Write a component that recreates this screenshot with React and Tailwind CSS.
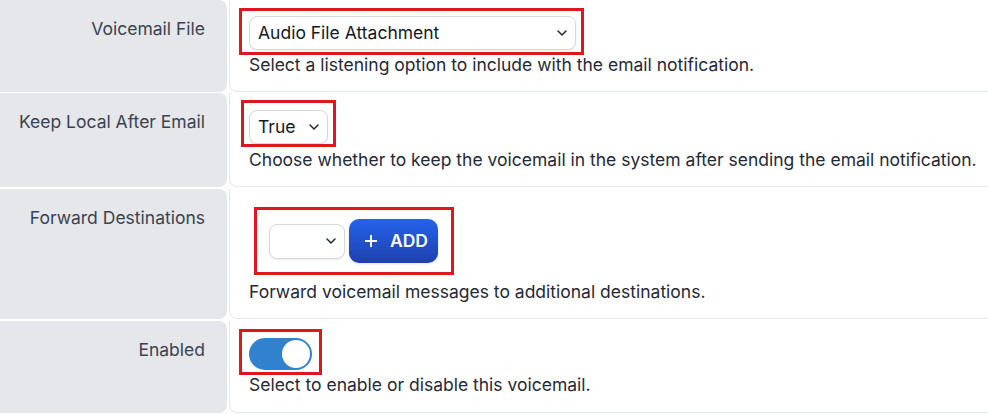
import { ChevronDown, Plus } from "lucide-react";

function Select({ value, className }) {
  return (
    <div
      className={`flex items-center justify-between h-[34px] rounded-lg border border-[#d4d7de] bg-white shadow-[0_1px_2px_rgba(0,0,0,0.08)] pl-[8px] pr-[5px] text-[17.5px] text-[#111827] ${className}`}
    >
      <span>{value}</span>
      <ChevronDown className="w-[16px] h-[16px] text-[#1f2937]" strokeWidth={2.25} />
    </div>
  );
}

function Row({ label, children, className }) {
  return (
    <div className={`flex gap-[2px] ${className}`}>
      <div className="w-[227px] shrink-0 bg-[#e5e7eb] rounded-r-lg text-right pr-[22px] pt-[17px] text-[17.5px] leading-6 text-[#3b4250]">
        {label}
      </div>
      <div className="relative flex-1 border-b border-l border-[#e4e7ec] rounded-bl-lg pl-[19px]">
        {children}
      </div>
    </div>
  );
}

function Mark({ className }) {
  return <div className={`absolute border-[3px] border-[#e0161f] ${className}`} />;
}

export default function App() {
  return (
    <div className="w-[988px] h-[414px] bg-white font-['Inter',sans-serif] flex flex-col gap-[1px] overflow-hidden">
      <Row label="Voicemail File" className="h-[92px]">
        <Select value="Audio File Attachment" className="mt-[16px] w-[327px]" />
        <p className="mt-[5px] text-[17.5px] leading-5 text-[#1f2937]">
          Select a listening option to include with the email notification.
        </p>
        <Mark className="left-[9px] top-[8px] w-[345px] h-[47px]" />
      </Row>

      <Row label="Keep Local After Email" className="h-[94px]">
        <Select value="True" className="mt-[17px] w-[79px]" />
        <p className="mt-[6px] text-[17.5px] leading-5 text-[#1f2937]">
          Choose whether to keep the voicemail in the system after sending the email notification.
        </p>
        <Mark className="left-[11px] top-[7px] w-[95px] h-[47px]" />
      </Row>

      <Row label="Forward Destinations" className="h-[130px] mt-[1px]">
        <div className="mt-[30px] pl-[20px] flex items-center gap-[4px]">
          <Select value="" className="w-[76px] h-[35px]" />
          <button className="flex items-center gap-[10px] h-[44px] pl-[13px] pr-[10px] rounded-[10px] bg-gradient-to-b from-[#2563eb] to-[#1e40af] text-white text-[17.5px] font-semibold shadow-sm">
            <Plus className="w-[18px] h-[18px]" strokeWidth={2.5} />
            ADD
          </button>
        </div>
        <p className="mt-[19px] text-[17.5px] leading-5 text-[#1f2937]">
          Forward voicemail messages to additional destinations.
        </p>
        <Mark className="left-[24px] top-[18px] w-[200px] h-[68px]" />
      </Row>

      <Row label="Enabled" className="h-[92px] mt-[1px]">
        <div className="mt-[17px] w-[63px] h-[32px] rounded-full bg-[#3182ce] p-[2px] flex justify-end">
          <div className="w-[28px] h-[28px] rounded-full bg-white" />
        </div>
        <p className="mt-[5px] text-[17.5px] leading-5 text-[#1f2937]">
          Select to enable or disable this voicemail.
        </p>
        <Mark className="left-[9px] top-[8px] w-[83px] h-[46px]" />
      </Row>
    </div>
  );
}
